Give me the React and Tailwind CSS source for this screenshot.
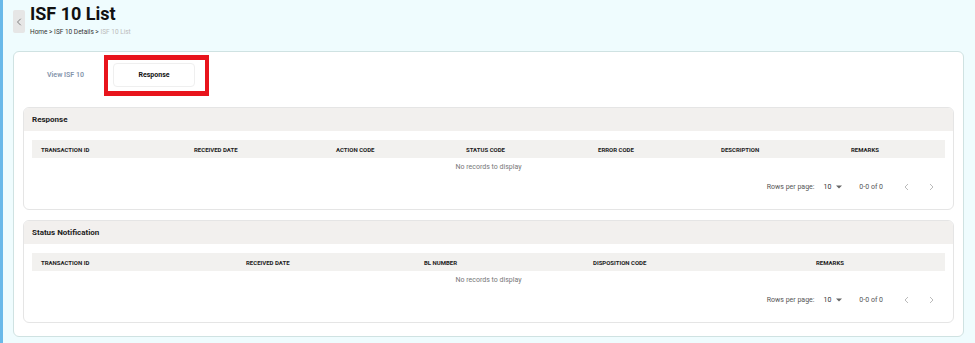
import { ChevronLeft } from 'lucide-react'

const font = { fontFamily: 'Roboto, "Liberation Sans", sans-serif' }

const responseCols = ['TRANSACTION ID', 'RECEIVED DATE', 'ACTION CODE', 'STATUS CODE', 'ERROR CODE', 'DESCRIPTION', 'REMARKS']
const statusCols = ['TRANSACTION ID', 'RECEIVED DATE', 'BL NUMBER', 'DISPOSITION CODE', 'REMARKS']

function Pagination() {
  return (
    <div className="flex h-[22px] items-center justify-end pr-[11px] text-[7px] text-[#555]">
      <span>Rows per page:</span>
      <span className="ml-[9px] text-[#333]">10</span>
      <svg width="6" height="4" viewBox="0 0 6 4" className="ml-[5px]">
        <path d="M0 0.5 L6 0.5 L3 3.5 Z" fill="#666" />
      </svg>
      <span className="ml-[17px]">0-0 of 0</span>
      {/* prev / next */}
      <svg width="5" height="8" viewBox="0 0 5 8" className="ml-[21px]">
        <path d="M4 1 L1 4 L4 7" fill="none" stroke="#bbb" strokeWidth="1" />
      </svg>
      <svg width="5" height="8" viewBox="0 0 5 8" className="ml-[20px]">
        <path d="M1 1 L4 4 L1 7" fill="none" stroke="#bbb" strokeWidth="1" />
      </svg>
    </div>
  )
}

function Section({ title, cols, grid }) {
  return (
    <div className="overflow-hidden rounded-[6px] border border-[#e5e5e5] bg-white">
      <div className="flex h-[23px] items-center bg-[#f2f0ee] px-[8px] text-[8px] font-bold text-[#222]">
        {title}
      </div>
      <div className="px-[8px] pt-[9px]">
        <div className={`grid h-[18px] items-center bg-[#f2f1ef] pl-[9px] text-[6px] font-bold text-[#222] ${grid}`}>
          {cols.map((c) => (
            <span key={c}>{c}</span>
          ))}
        </div>
        <div className="flex h-[18px] items-center justify-center text-[7px] text-[#777]">
          No records to display
        </div>
        <Pagination />
      </div>
      <div className="h-[11px]" />
    </div>
  )
}

export default function App() {
  return (
    <div
      className="h-[343px] w-[975px] overflow-hidden border-l-[3px] border-[#6ab9e9] bg-[#effcfe] pl-[10px] pr-[11px]"
      style={font}
    >
      <div className="flex h-[51px] items-start">
        <button className="mt-[10px] flex h-[23px] w-[12px] items-center justify-center rounded-[2px] bg-[#e6e6e6] text-[#555]">
          <ChevronLeft size={12} strokeWidth={1.4} />
        </button>
        <div className="ml-[5px]">
          <h1 className="mt-[4px] text-[18px] leading-[20px] font-bold text-[#111]">ISF 10 List</h1>
          <div className="mt-[4px] text-[6.5px] text-[#333]">
            Home &gt; ISF 10 Details &gt; <span className="text-[#bbb]">ISF 10 List</span>
          </div>
        </div>
      </div>

      <div className="h-[286px] rounded-[6px] border border-[#cfe2e2] bg-white px-[9px]">
        <div className="flex h-[55px] items-center pb-[9px]">
          <div className="w-[90px] pl-[24px] text-[7px] font-semibold text-[#8393aa]">View ISF 10</div>
          <div className="relative">
            <div className="flex h-[24px] w-[82px] items-center justify-center rounded-[4px] border border-[#efefef] bg-white text-[7px] font-bold text-[#111]">
              Response
            </div>
            <div className="pointer-events-none absolute -top-[8px] -left-[9px] h-[41px] w-[105px] border-x-[4px] border-y-[5px] border-[#e8141c]" />
          </div>
        </div>

        <div className="flex flex-col gap-[10px]">
          <Section
            title="Response"
            cols={responseCols}
            grid="grid-cols-[153px_142px_130px_132px_123px_130px_1fr]"
          />
          <Section
            title="Status Notification"
            cols={statusCols}
            grid="grid-cols-[205px_178px_169px_223px_1fr]"
          />
        </div>
      </div>
    </div>
  )
}
